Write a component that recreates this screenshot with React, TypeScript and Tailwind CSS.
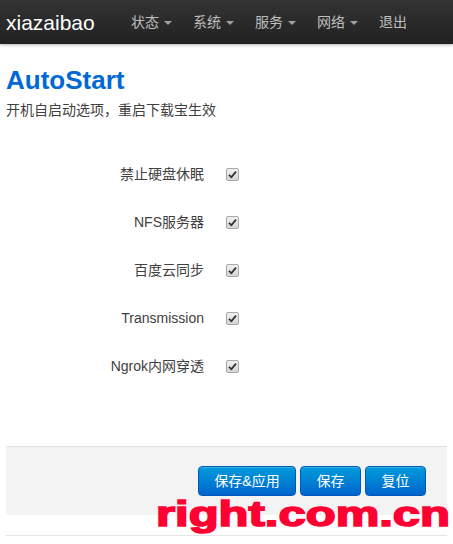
const font = { fontFamily: '"Liberation Sans", "Noto Sans CJK SC", sans-serif' };

const navItems = [
  { label: "状态", caret: true },
  { label: "系统", caret: true },
  { label: "服务", caret: true },
  { label: "网络", caret: true },
  { label: "退出", caret: false },
];

const options = ["禁止硬盘休眠", "NFS服务器", "百度云同步", "Transmission", "Ngrok内网穿透"];

const Check = () => (
  <span className="flex h-[13px] w-[13px] items-center justify-center rounded-[2px] border border-[#a9a9a9] bg-linear-to-b from-[#f0f0f0] to-[#d6d6d6]">
    <svg width="9" height="9" viewBox="0 0 9 9">
      <path d="M1 4.8 L3.4 7.2 L8 1.6" fill="none" stroke="#333" strokeWidth="1.8" />
    </svg>
  </span>
);

const Btn = ({ label, w }: { label: string; w: string }) => (
  <button
    className={`${w} h-[30px] rounded-[4px] border border-[#0058b8] bg-linear-to-b from-[#049cdb] to-[#0064cd] text-[14px] text-white shadow-[inset_0_1px_0_rgba(255,255,255,0.2)]`}
  >
    {label}
  </button>
);

export default function App() {
  return (
    <div className="relative h-[544px] w-[453px] overflow-hidden bg-white text-[#404040]" style={font}>
      <div className="flex h-[44px] items-center bg-linear-to-b from-[#333333] to-[#222222] shadow-[0_1px_3px_rgba(0,0,0,0.3)]">
        <div className="ml-[6px] w-[115px] text-[21px] leading-none text-white">xiazaibao</div>
        {navItems.map((n) => (
          <div key={n.label} className="flex items-center pl-[10px] pr-[11px] text-[14px] text-[#bfbfbf]">
            <span>{n.label}</span>
            {n.caret && (
              <span className="ml-[5px] mt-[2px] h-0 w-0 border-x-[4px] border-t-[4px] border-x-transparent border-t-[#a0a0a0]" />
            )}
          </div>
        ))}
      </div>

      <div className="px-[6px]">
        <h2 className="mt-[18px] text-[26px] font-bold leading-[36px] text-[#0069d6]">AutoStart</h2>
        <p className="mt-[2px] text-[14px] leading-[20px]">开机自启动选项，重启下载宝生效</p>

        <div className="mt-[30px]">
          {options.map((o) => (
            <div key={o} className="flex h-[48px] items-center">
              <div className="w-[198px] text-right text-[14px]">{o}</div>
              <div className="ml-[22px]">
                <Check />
              </div>
            </div>
          ))}
        </div>

        <div className="mt-[56px] flex justify-end gap-[4px] rounded-b-[4px] border-t border-[#e0e0e0] bg-[#f3f3f3] pb-[19px] pr-[21px] pt-[19px]">
          <Btn label="保存&应用" w="w-[98px]" />
          <Btn label="保存" w="w-[61px]" />
          <Btn label="复位" w="w-[61px]" />
        </div>
        <div className="mt-[20px] border-t border-[#e5e5e5]" />
      </div>

      {/* watermark */}
      <div className="absolute left-[156px] top-[496px] origin-left scale-x-[1.4] text-[35px] font-bold leading-none text-[#ff0033] [-webkit-text-stroke:1.6px_#ff0033]">
        right.com.cn
      </div>
    </div>
  );
}
